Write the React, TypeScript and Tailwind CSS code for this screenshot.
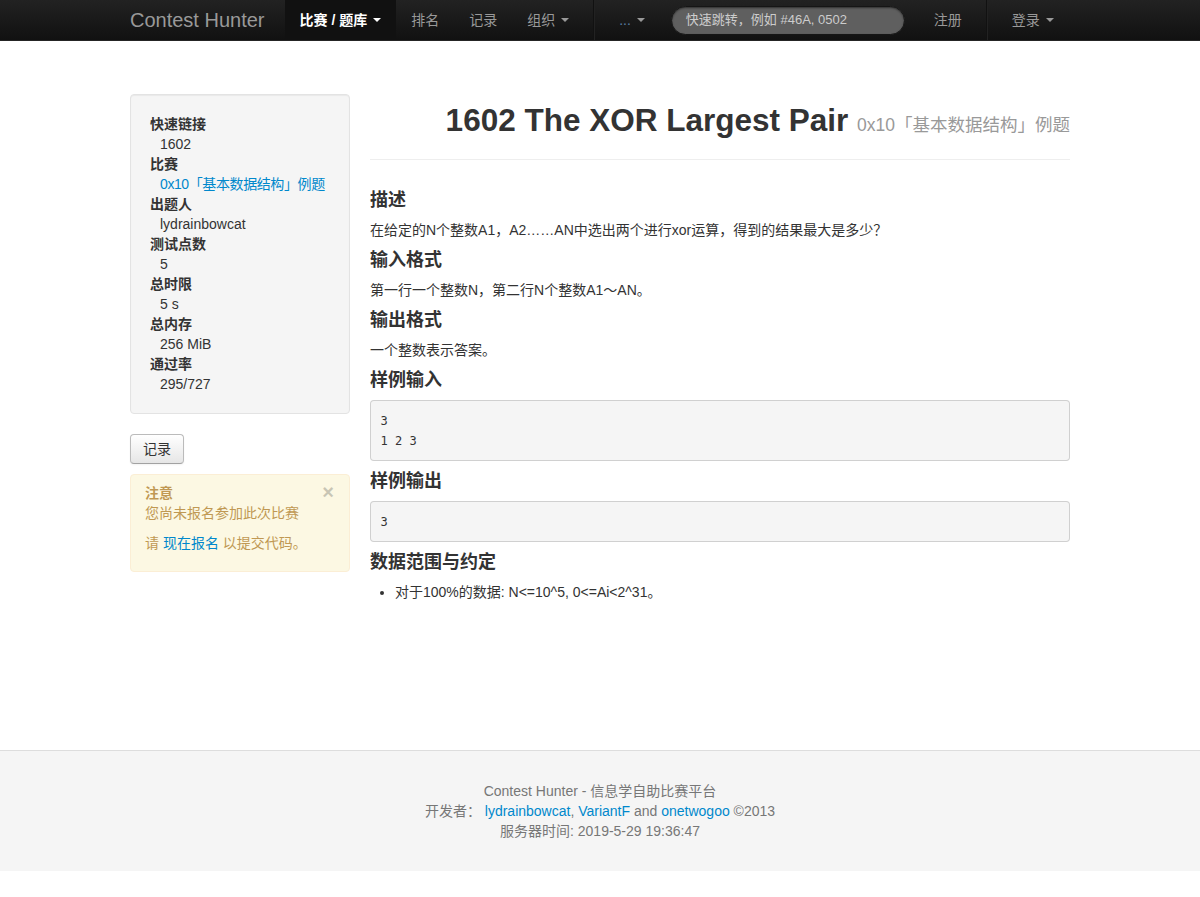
import React from 'react';

const font = { fontFamily: "'Liberation Sans', 'Noto Sans CJK SC', sans-serif" };

const Caret = ({ color = 'border-t-[#999]' }: { color?: string }) => (
    <span className={`inline-block w-0 h-0 border-x-[4px] border-x-transparent border-t-[4px] ${color} ml-[6px] align-middle`} />
);

const Divider = () => <div className="h-10 mx-[9px] border-l border-l-[#111] border-r border-r-[#222]" />;

const info = [
    { label: '快速链接', value: '1602' },
    { label: '比赛', value: '0x10「基本数据结构」例题', link: true },
    { label: '出题人', value: 'lydrainbowcat' },
    { label: '测试点数', value: '5' },
    { label: '总时限', value: '5 s' },
    { label: '总内存', value: '256 MiB' },
    { label: '通过率', value: '295/727' },
];

const Navbar = () => (
    <div className="h-[41px] bg-linear-to-b from-[#222] to-[#111] border-b border-[#252525]">
        <div className="w-[940px] mx-auto flex items-center h-10 text-sm leading-5 text-[#999]">
            <span className="text-[20px] pr-5 py-[10px] leading-5">Contest Hunter</span>
            <span className="h-10 flex items-center px-[15px] bg-[#111] text-white font-bold">
                比赛 / 题库 <Caret color="border-t-white" />
            </span>
            <span className="h-10 flex items-center px-[15px]">排名</span>
            <span className="h-10 flex items-center px-[15px]">记录</span>
            <span className="h-10 flex items-center px-[15px]">
                组织 <Caret />
            </span>
            <Divider />
            <span className="h-10 flex items-center px-[15px]">
                <span className="text-[#5a7fa3]">...</span> <Caret />
            </span>
            <div className="ml-[11px] w-[234px] h-[29px] rounded-full bg-[#5f5f5f] border border-[#151515] shadow-[inset_0_1px_2px_rgba(0,0,0,0.5)] flex items-center px-[14px] text-[#ccc] text-[13px]">
                快速跳转，例如 #46A, 0502
            </div>
            <span className="h-10 flex items-center px-[15px] ml-[14px]">注册</span>
            <Divider />
            <span className="h-10 flex items-center px-[15px]">
                登录 <Caret />
            </span>
        </div>
    </div>
);

const Sidebar = () => (
    <div className="w-[220px] shrink-0">
        <div className="bg-[#f5f5f5] border border-[#e3e3e3] rounded-[4px] p-[19px] shadow-[inset_0_1px_1px_rgba(0,0,0,0.05)]">
            <dl className="leading-5">
                {info.map((i) => (
                    <React.Fragment key={i.label}>
                        <dt className="font-bold">{i.label}</dt>
                        <dd className={`ml-[10px] whitespace-nowrap ${i.link ? 'text-[#0088cc] tracking-[-0.4px]' : ''}`}>{i.value}</dd>
                    </React.Fragment>
                ))}
            </dl>
        </div>
        <button className="mt-5 h-[30px] px-3 text-sm leading-5 text-[#333] rounded-[4px] border border-[#bbb] border-b-[#a2a2a2] bg-linear-to-b from-white to-[#e6e6e6] shadow-[inset_0_1px_0_rgba(255,255,255,0.2),0_1px_2px_rgba(0,0,0,0.05)]">
            记录
        </button>
        <div className="relative mt-[10px] bg-[#fcf8e3] border border-[#fbeed5] rounded-[4px] pt-2 pb-2 pl-[14px] pr-[35px] text-[#c09853] leading-5">
            <span className="absolute right-[15px] top-[7px] text-[20px] font-bold leading-5 text-black opacity-20">×</span>
            <h4 className="font-bold">注意</h4>
            <p className="mb-[10px]">您尚未报名参加此次比赛</p>
            <p className="mb-[10px]">
                请 <span className="text-[#0088cc]">现在报名</span> 以提交代码。
            </p>
        </div>
    </div>
);

const H3 = ({ children }: { children: React.ReactNode }) => (
    <h3 className="text-[18px] font-bold leading-5 mb-[10px]">{children}</h3>
);

const Pre = ({ lines }: { lines: string[] }) => (
    <pre className="bg-[#f5f5f5] border border-[rgba(0,0,0,0.15)] rounded-[4px] p-[9.5px] mb-[10px] text-[12px] leading-5 text-[#333] font-['DejaVu_Sans_Mono',monospace]">
        {lines.join('\n')}
    </pre>
);

const Main = () => (
    <div className="w-[700px] shrink-0">
        <div className="border-b border-[#eee] pb-[9px] mb-[30px]">
            <h2 className="mt-[6px] mb-[10px] h-10 text-right text-[31.5px] leading-10 font-bold text-[#333]">
                1602 The XOR Largest Pair{' '}
                <small className="text-[17.5px] leading-none font-normal text-[#999]">0x10「基本数据结构」例题</small>
            </h2>
        </div>
        <H3>描述</H3>
        <p className="mb-[10px]">在给定的N个整数A1，A2……AN中选出两个进行xor运算，得到的结果最大是多少？</p>
        <H3>输入格式</H3>
        <p className="mb-[10px]">第一行一个整数N，第二行N个整数A1～AN。</p>
        <H3>输出格式</H3>
        <p className="mb-[10px]">一个整数表示答案。</p>
        <H3>样例输入</H3>
        <Pre lines={['3', '1 2 3']} />
        <H3>样例输出</H3>
        <Pre lines={['3']} />
        <H3>数据范围与约定</H3>
        <ul className="list-disc ml-[25px] mb-[10px]">
            <li>对于100%的数据: N&lt;=10^5, 0&lt;=Ai&lt;2^31。</li>
        </ul>
    </div>
);

export default function App() {
    return (
        <div style={font} className="min-h-[897px] bg-white text-sm leading-5 text-[#333]">
            <Navbar />
            <div className="w-[940px] mx-auto pt-[53px] flex gap-5">
                <Sidebar />
                <Main />
            </div>
            <footer className="mt-[138px] border-t border-[#ddd] bg-[#f5f5f5] py-[30px] text-center text-[#777] leading-5">
                <p>Contest Hunter - 信息学自助比赛平台</p>
                <p>
                    开发者：&nbsp;<span className="text-[#0088cc]">lydrainbowcat</span>,{' '}
                    <span className="text-[#0088cc]">VariantF</span> and{' '}
                    <span className="text-[#0088cc]">onetwogoo</span> ©2013
                </p>
                <p>服务器时间: 2019-5-29 19:36:47</p>
            </footer>
        </div>
    );
}
